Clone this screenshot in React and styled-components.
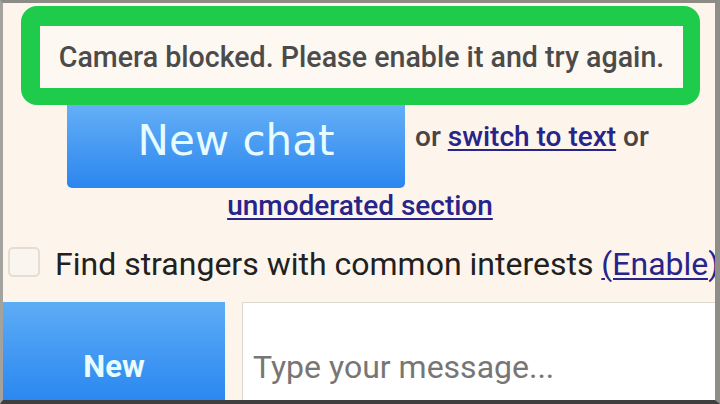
import React from "react";
import styled, { createGlobalStyle } from "styled-components";

const GlobalStyle = createGlobalStyle`
  html, body {
    margin: 0;
    padding: 0;
    background: #fdf5ec;
  }
  * {
    box-sizing: border-box;
  }
`;

export default function App() {
  return (
    <>
      <GlobalStyle />
      <Frame>
        <Notice>
          <NoticeText>Camera blocked. Please enable it and try again.</NoticeText>
        </Notice>
        <StartRow>
          <BigButton>New chat</BigButton>
          <Options>
            or <Link href="#">switch to text</Link> or
          </Options>
        </StartRow>
        <Center>
          <Link href="#">unmoderated section</Link>
        </Center>
        <InterestRow>
          <CheckBox />
          <InterestLabel>
            Find strangers with common interests <Link href="#">(Enable)</Link>
          </InterestLabel>
        </InterestRow>
        <Composer>
          <SideButton>New</SideButton>
          <MessageBox>
            <Placeholder>Type your message...</Placeholder>
          </MessageBox>
        </Composer>
      </Frame>
    </>
  );
}

const Frame = styled.div`
  width: 720px;
  height: 404px;
  overflow: hidden;
  background: #fdf5ec;
  border-top: 3px solid #8c8b86;
  border-left: 3px solid #a3a29d;
  border-right: 5px solid #8e8d88;
  border-bottom: 4px solid #3f3f3f;
  display: flex;
  flex-direction: column;
  font-family: Roboto, "Liberation Sans", sans-serif;
`;

const Notice = styled.div`
  margin: 3px 0 0 18px;
  width: 679px;
  height: 99px;
  border: solid #1ecb4b;
  border-width: 20px 17px 17px 19px;
  border-radius: 16px;
  background: #fdf8f2;
  display: flex;
  align-items: center;
  justify-content: center;
  flex-shrink: 0;
`;

const NoticeText = styled.span`
  font-size: 28.6px;
  font-weight: 500;
  color: #4c4b49;
  white-space: nowrap;
  padding-bottom: 1px;
`;

const StartRow = styled.div`
  display: flex;
  align-items: flex-start;
  height: 83px;
  flex-shrink: 0;
`;

const BigButton = styled.button`
  margin-left: 64px;
  width: 338px;
  height: 83px;
  border: none;
  border-radius: 0 0 5px 5px;
  background: linear-gradient(#64aff7, #2b86ee);
  color: #e6fcff;
  font-family: "DejaVu Sans", Verdana, sans-serif;
  font-size: 42px;
  padding: 0 0 12px;
`;

const Options = styled.div`
  margin: 15px 0 0 10px;
  font-size: 28px;
  font-weight: 500;
  color: #474644;
  white-space: nowrap;
`;

const Link = styled.a`
  color: #27248a;
  text-decoration: underline;
  text-decoration-thickness: 2px;
  text-underline-offset: 3px;
`;

const Center = styled.div`
  margin-top: 3px;
  height: 30px;
  line-height: 30px;
  text-align: center;
  font-size: 28px;
  font-weight: 500;
  padding-left: 2px;
  flex-shrink: 0;
`;

const InterestRow = styled.div`
  margin-top: 26px;
  height: 30px;
  display: flex;
  align-items: center;
  white-space: nowrap;
  flex-shrink: 0;
`;

const CheckBox = styled.span`
  margin-left: 5px;
  width: 32px;
  height: 30px;
  border: 2px solid #e2ddd6;
  border-radius: 5px;
  background: #faf5ee;
  flex-shrink: 0;
`;

const InterestLabel = styled.span`
  margin-left: 15px;
  padding-top: 4px;
  font-size: 32px;
  color: #212121;
`;

const Composer = styled.div`
  margin-top: 25px;
  flex: 1;
  display: flex;
  gap: 17px;
`;

const SideButton = styled.button`
  width: 222px;
  border: none;
  background: linear-gradient(#5eacf6, #2a88f0);
  color: #e8fcff;
  font-family: Roboto, "Liberation Sans", sans-serif;
  font-weight: bold;
  font-size: 31px;
  padding: 30px 0 0;
`;

const MessageBox = styled.div`
  flex: 1;
  background: #ffffff;
  border: 1px solid #dcd8d2;
  border-right: none;
  border-bottom: none;
  display: flex;
  align-items: center;
  padding: 30px 0 0 10px;
`;

const Placeholder = styled.span`
  font-size: 32px;
  color: #777675;
`;
